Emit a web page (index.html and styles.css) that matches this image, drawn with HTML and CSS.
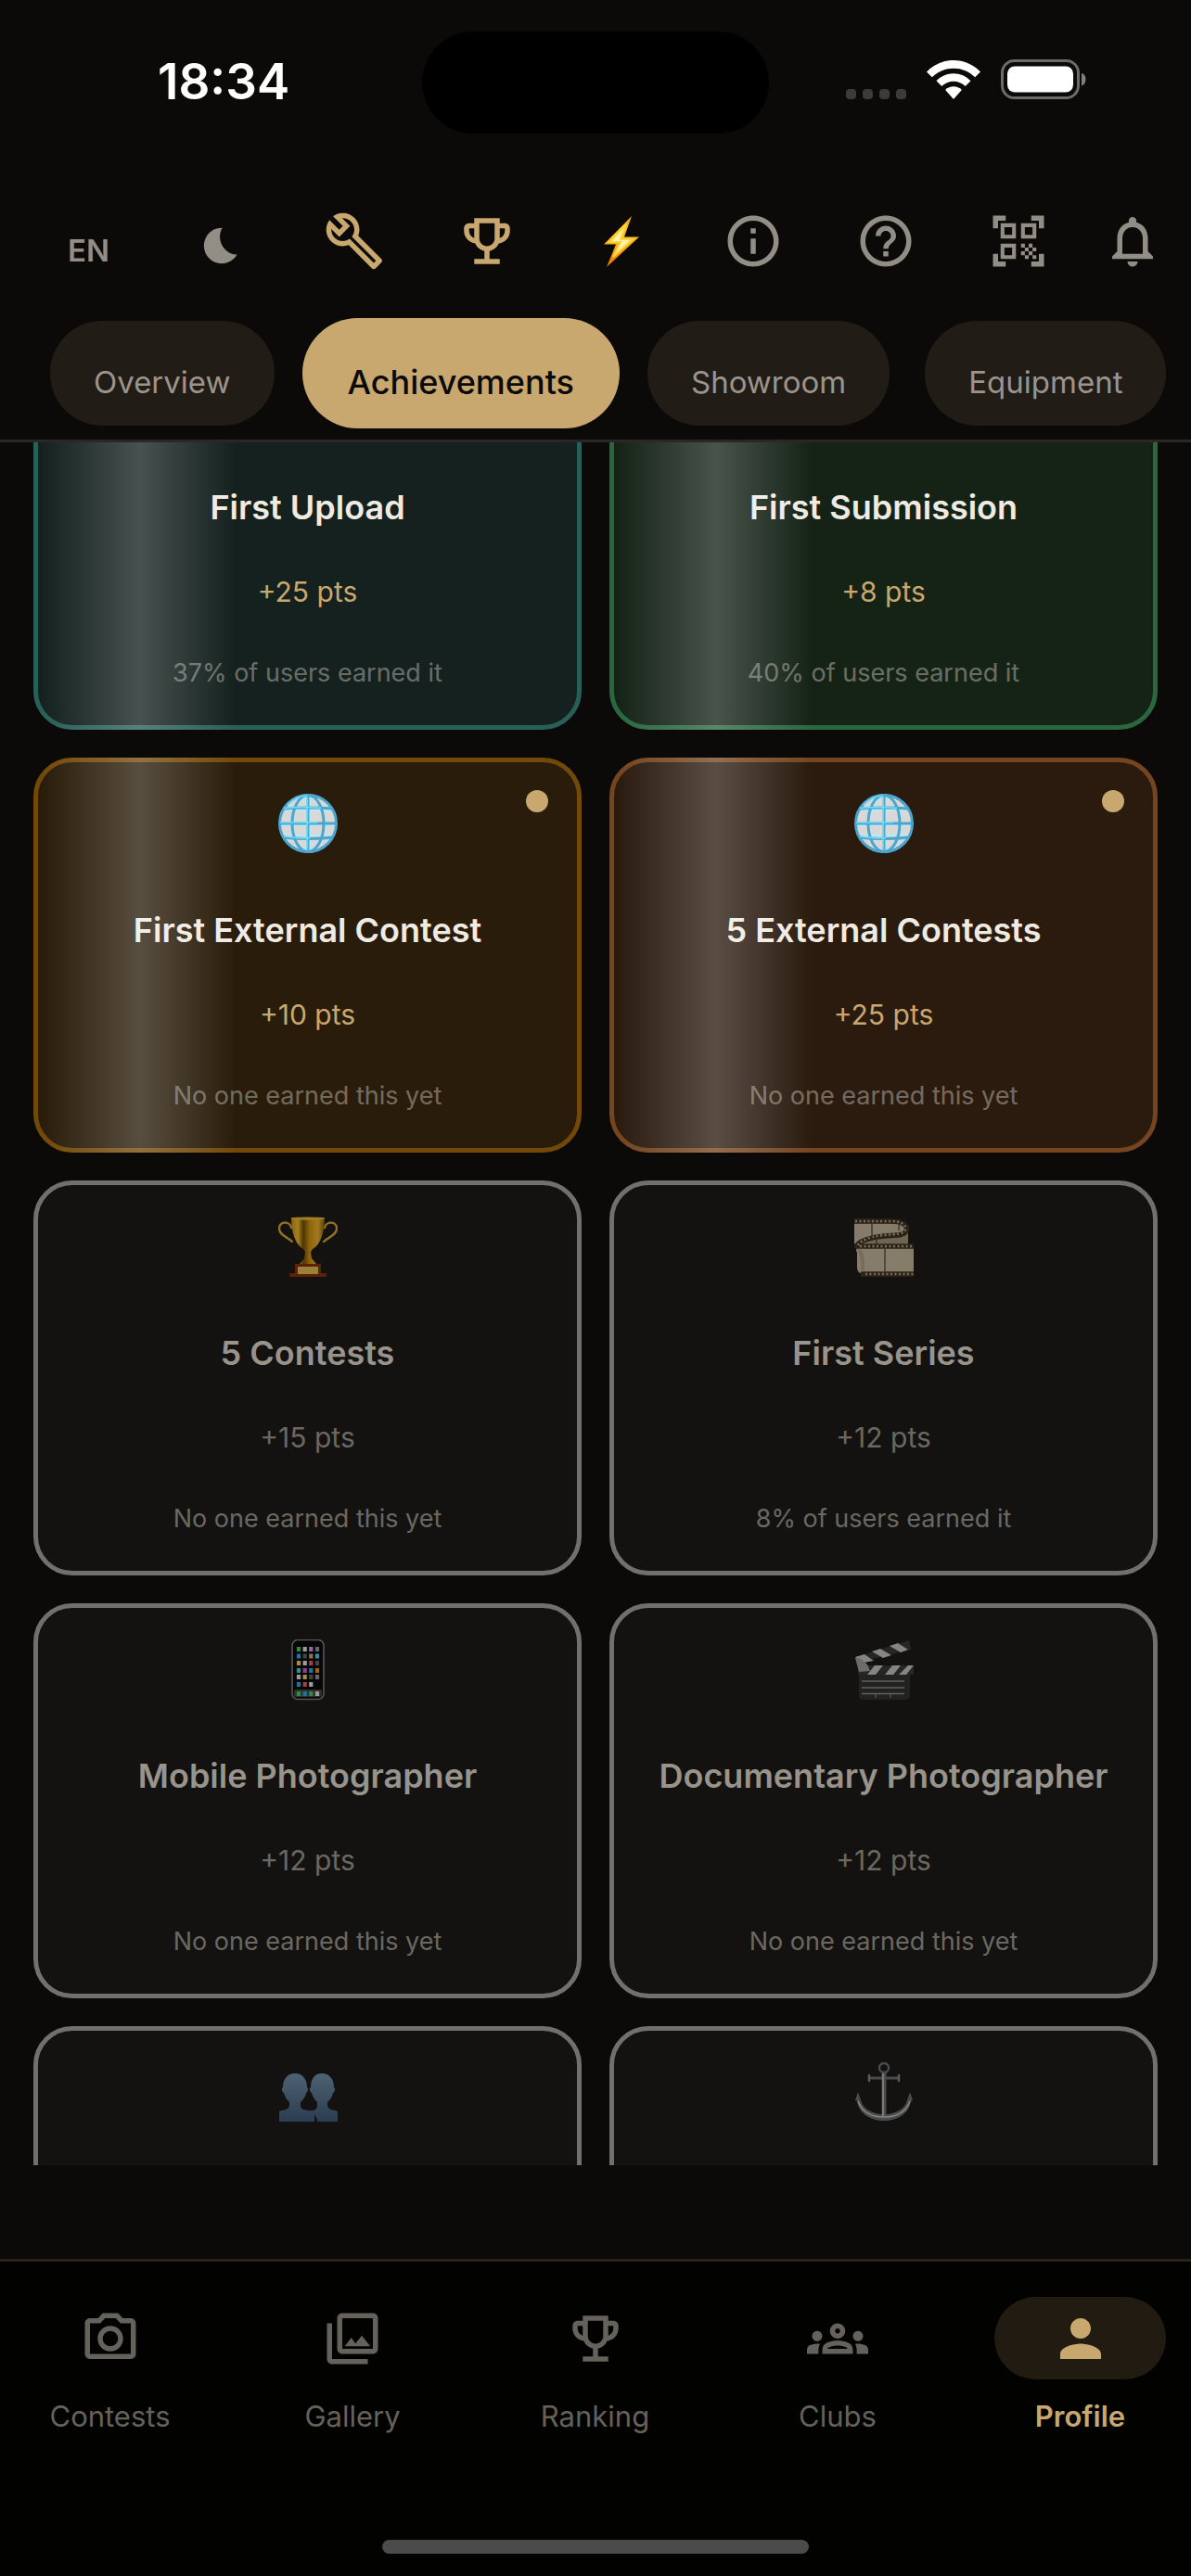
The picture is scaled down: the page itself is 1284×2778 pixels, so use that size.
FILE: index.html
```html
<!DOCTYPE html>
<html lang="en">
<head>
  <meta charset="UTF-8" />
  <meta name="viewport" content="width=device-width, initial-scale=1.0" />
  <title>Profile - Achievements</title>
  <link rel="stylesheet" href="styles.css">
</head>
<body>
  <!-- shared icon shapes -->
  <svg class="defs" aria-hidden="true">
    <symbol id="i-trophy" viewBox="0 0 24 24"><path d="M19 5h-2V3H7v2H5c-1.1 0-2 .9-2 2v1c0 2.55 1.92 4.63 4.39 4.94.63 1.5 1.98 2.63 3.61 2.96V19H7v2h10v-2h-4v-3.1c1.63-.33 2.98-1.46 3.61-2.96C19.08 12.63 21 10.55 21 8V7c0-1.1-.9-2-2-2zM5 8V7h2v3.82C5.84 10.4 5 9.3 5 8zm7 6c-1.65 0-3-1.35-3-3V5h6v6c0 1.65-1.35 3-3 3zm7-6c0 1.3-.84 2.4-2 2.82V7h2v1z"/></symbol>
    <symbol id="e-globe" viewBox="0 0 64 66">
      <circle cx="32" cy="32" r="31" fill="#d9d8d6"/>
      <g fill="none" stroke="#b9e9f7" stroke-width="2">
        <ellipse cx="33" cy="33" rx="17" ry="30"/><path d="M34 3v58M3 34h57M7 18h50M7 45h50"/>
      </g>
      <g fill="none" stroke="#4aa6cf" stroke-width="3">
        <ellipse cx="32" cy="32" rx="17" ry="30.5"/>
        <path d="M32 1v62M1 32h62"/>
        <path d="M6 16q26-2 52 0M5 47q27 3 54 0"/>
        <circle cx="32" cy="32" r="30.5"/>
      </g>
      <path d="M6 15.500q22-2 40 0M2 31h40M6 46q14 2 28 2M10 12Q20 2 31 2M31 3v58" fill="none" stroke="#74dcf6" stroke-width="1.600"/>
    </symbol>
  </svg>

  <div class="status">
    <time class="clock">18:34</time>
    <div class="island"></div>
    <div class="signals">
      <span class="cell"><i></i><i></i><i></i><i></i></span>
      <svg class="wifi" viewBox="0 0 58 42" aria-hidden="true">
        <path d="M29 0C18 0 8 4.300 0 12.500L5.800 18.300C12 12 20 8.700 29 8.700S46 12 52.200 18.300L58 12.500C50 4.300 40 0 29 0z"/>
        <path d="M29 14.300c-7.200 0-13.600 2.900-18.500 7.900l5.800 5.900c3.300-3.400 7.800-5.400 12.700-5.400s9.400 2 12.700 5.400l5.800-5.900C42.600 17.200 36.200 14.300 29 14.300z"/>
        <path d="M29 28.300c-3.500 0-6.500 1.300-8.800 3.700L29 42l8.800-10c-2.300-2.400-5.300-3.700-8.800-3.700z"/>
      </svg>
      <svg class="battery" viewBox="0 0 93 43" aria-hidden="true">
        <rect x="1.500" y="1.500" width="82" height="40" rx="13" fill="none" stroke="#6b6b6a" stroke-width="3"/>
        <rect x="7" y="7.500" width="71" height="28" rx="8"/>
        <path d="M87 15c6 1 6 12 0 13.500z" fill="#80807f"/>
      </svg>
    </div>
  </div>

  <header class="top">
    <div class="tools">
      <button class="tool lang">EN</button>
      <button class="tool moon" aria-label="Dark mode"><svg viewBox="0 0 24 24"><path d="M12.340 2.020C6.590 1.820 2 6.420 2 12c0 5.520 4.480 10 10 10 3.710 0 6.930-2.020 8.660-5.020-7.510-.25-12.090-8.430-8.320-14.960z"/></svg></button>
      <button class="tool gold" aria-label="Tools"><svg viewBox="0 0 24 24"><path d="M22.610 18.990l-9.080-9.080c.93-2.340.45-5.100-1.440-7C9.790.61 6.210.4 3.660 2.260L7.500 6.110 6.080 7.520 2.250 3.690C.39 6.230.6 9.820 2.900 12.110c1.860 1.860 4.570 2.350 6.890 1.480l9.110 9.110c.39.39 1.020.39 1.410 0l2.300-2.300c.4-.38.4-1.010 0-1.410zm-3 1.600l-9.460-9.460c-.61.45-1.290.72-2 .82-1.360.2-2.790-.21-3.830-1.250C3.370 9.760 2.930 8.500 3 7.260l3.090 3.090 4.240-4.240-3.090-3.090c1.240-.07 2.490.37 3.440 1.310 1.080 1.080 1.490 2.570 1.240 3.960-.12.71-.42 1.370-.88 1.960l9.450 9.450-.88.89z"/></svg></button>
      <button class="tool gold" aria-label="Awards"><svg><use href="#i-trophy"/></svg></button>
      <button class="tool" aria-label="Boost"><svg viewBox="0 0 66 66">
        <defs><linearGradient id="g-bolt" x1="0" y1="0" x2="0" y2="1"><stop offset="0" stop-color="#ffae0c"/><stop offset=".4" stop-color="#ffc21c"/><stop offset=".6" stop-color="#ffa00a"/><stop offset="1" stop-color="#e87a00"/></linearGradient></defs>
        <path d="M45 6L15 36.500h13L18 61 53 28.500H37z" fill="url(#g-bolt)"/>
        <path d="M39 15L21 34h12l-8 16 21-19H33z" fill="#fff3a6" stroke="#ffd53d" stroke-width="2"/>
      </svg></button>
      <button class="tool" aria-label="Info"><svg viewBox="0 0 24 24"><path d="M11 7h2v2h-2zm0 4h2v6h-2zm1-9C6.480 2 2 6.480 2 12s4.480 10 10 10 10-4.480 10-10S17.520 2 12 2zm0 18c-4.410 0-8-3.590-8-8s3.590-8 8-8 8 3.590 8 8-3.590 8-8 8z"/></svg></button>
      <button class="tool" aria-label="Help"><svg viewBox="0 0 24 24"><path d="M11 18h2v-2h-2v2zm1-16C6.480 2 2 6.480 2 12s4.480 10 10 10 10-4.480 10-10S17.520 2 12 2zm0 18c-4.410 0-8-3.590-8-8s3.590-8 8-8 8 3.590 8 8-3.590 8-8 8zm0-14c-2.210 0-4 1.790-4 4h2c0-1.100.9-2 2-2s2 .9 2 2c0 2-3 1.750-3 5h2c0-2.250 3-2.500 3-5 0-2.210-1.790-4-4-4z"/></svg></button>
      <button class="tool" aria-label="Scan QR code"><svg viewBox="0 0 24 24"><path d="M9.500 6.500v3h-3v-3h3M11 5H5v6h6V5zm-1.500 9.500v3h-3v-3h3M11 13H5v6h6v-6zm6.500-6.500v3h-3v-3h3M19 5h-6v6h6V5zm-6 8h1.500v1.500H13V13zm1.500 1.500H16V16h-1.500v-1.500zM16 13h1.500v1.500H16V13zm-3 3h1.500v1.500H13V16zm1.500 1.500H16V19h-1.500v-1.500zM16 16h1.500v1.500H16V16zm1.500-1.500H19V16h-1.500v-1.500zm0 3H19V19h-1.500v-1.500zM22 7h-2V4h-3V2h5v5zm0 15v-5h-2v3h-3v2h5zM2 22h5v-2H4v-3H2v5zM2 2v5h2V4h3V2H2z"/></svg></button>
      <button class="tool bell" aria-label="Notifications"><svg viewBox="0 0 24 24"><path d="M12 22c1.100 0 2-.9 2-2h-4c0 1.100.9 2 2 2zm6-6v-5c0-3.070-1.630-5.640-4.500-6.320V4c0-.83-.67-1.500-1.500-1.500s-1.500.67-1.500 1.500v.68C7.640 5.360 6 7.920 6 11v5l-2 2v1h16v-1l-2-2zm-2 1H8v-6c0-2.480 1.510-4.500 4-4.500s4 2.020 4 4.500v6z"/></svg></button>
    </div>
    <div class="tabs">
      <button class="tab">Overview</button>
      <button class="tab active">Achievements</button>
      <button class="tab">Showroom</button>
      <button class="tab">Equipment</button>
    </div>
  </header>

  <main class="scroller" id="scroller">
    <div class="grid">
      <article class="card teal">
        <div class="emoji"></div>
        <h3>First Upload</h3>
        <p class="pts">+25 pts</p>
        <p class="rate">37% of users earned it</p>
      </article>
      <article class="card green">
        <div class="emoji"></div>
        <h3>First Submission</h3>
        <p class="pts">+8 pts</p>
        <p class="rate">40% of users earned it</p>
      </article>

      <article class="card amber">
        <span class="dot"></span>
        <svg class="emoji"><use href="#e-globe"/></svg>
        <h3>First External Contest</h3>
        <p class="pts">+10 pts</p>
        <p class="rate">No one earned this yet</p>
      </article>
      <article class="card bronze">
        <span class="dot"></span>
        <svg class="emoji"><use href="#e-globe"/></svg>
        <h3>5 External Contests</h3>
        <p class="pts">+25 pts</p>
        <p class="rate">No one earned this yet</p>
      </article>

      <article class="card locked">
        <svg class="emoji" viewBox="0 0 64 66">
          <defs><linearGradient id="g-cup"><stop offset="0" stop-color="#8a6410"/><stop offset=".2" stop-color="#a5801f"/><stop offset=".36" stop-color="#4d3508"/><stop offset=".55" stop-color="#8f6508"/><stop offset=".8" stop-color="#a07a22"/><stop offset="1" stop-color="#5c400a"/></linearGradient></defs>
          <path d="M14 12C13 5 1 4 1 13c0 7 9 9 14 14M50 12C51 5 63 4 63 13c0 7-9 9-14 14" fill="none" stroke="#8f7027" stroke-width="2.400" stroke-linecap="round"/>
          <path d="M14 1h36c0 15-4 29-13 34l-2 3 1 7 5 6H23l5-6 1-7-2-3C18 30 14 16 14 1z" fill="url(#g-cup)"/>
          <ellipse cx="32" cy="2" rx="18" ry="1.600" fill="#a38028"/>
          <path d="M18 51h28v10h6v4H12v-4h6z" fill="#59230a"/>
          <rect x="21" y="54" width="22" height="8" fill="#9c8038"/>
        </svg>
        <h3>5 Contests</h3>
        <p class="pts">+15 pts</p>
        <p class="rate">No one earned this yet</p>
      </article>
      <article class="card locked">
        <svg class="emoji" viewBox="0 0 64 66">
          <path d="M0 5C24 5 56 4 58 14V38H2V31L0 29z" fill="#6f6553"/>
          <path d="M0 8h48c6 0 8 4 6 7L2 28 0 29z" fill="#857b68"/>
          <path d="M3 34h61v28H12C6 62 3 60 3 54z" fill="#857c69"/>
          <path d="M6 36q4 10 3 22" fill="none" stroke="#786d5a" stroke-width="4"/>
          <path d="M0 5h38c14 0 20 4 18 10s-10 5-24 6S3 27 3 32h61M7 62h57" fill="none" stroke="#2c2418" stroke-width="5.500"/>
          <path d="M1 5h38c12 0 17 4 16 9s-10 5-23 6-25 5-28 11M6 32h58M12 62h52" fill="none" stroke="#786d5a" stroke-width="2.600" stroke-dasharray="2 2.500"/>
          <path d="M19 8v15M24 25v6M48 9v6M33 35v24" stroke="#31291d" stroke-width="1.200"/>
        </svg>
        <h3>First Series</h3>
        <p class="pts">+12 pts</p>
        <p class="rate">8% of users earned it</p>
      </article>

      <article class="card locked">
        <svg class="emoji" viewBox="0 0 64 66">
          <rect x="15" y="0.500" width="34" height="64" rx="6" fill="#070707" stroke="#565654" stroke-width="1.600"/>
          <rect x="17" y="54" width="30" height="8" rx="2" fill="#30302f"/>
          <!-- app icons, one column at a time -->
          <g fill="none" stroke-width="4.200">
            <path d="M22 8v5M22 56v5" stroke="#2e8b46"/><path d="M22 15.500v5M22 46v5" stroke="#1878a4"/><path d="M22 23v5" stroke="#a09040"/><path d="M22 31v5" stroke="#388e8e"/><path d="M22 38v5" stroke="#9b9b99"/>
            <path d="M28.700 8v5M28.700 23v5" stroke="#9b9b99"/><path d="M28.700 15.500v5" stroke="#444"/><path d="M28.700 31v5" stroke="#983c94"/><path d="M28.700 38v5" stroke="#a09040"/><path d="M28.700 46v5" stroke="#a0413e"/><path d="M28.700 56v5" stroke="#1878a4"/>
            <path d="M35.300 8v5" stroke="#9168a6"/><path d="M35.300 15.500v5" stroke="#88735d"/><path d="M35.300 23v5" stroke="#a0413e"/><path d="M35.300 31v5" stroke="#1878a4"/><path d="M35.300 38v5" stroke="#444"/><path d="M35.300 46v5" stroke="#9b9b99"/><path d="M35.300 56v5" stroke="#2e8b46"/>
            <path d="M42 8v5M42 38v5" stroke="#666"/><path d="M42 15.500v5" stroke="#388ea4"/><path d="M42 23v5" stroke="#444"/><path d="M42 31v5" stroke="#a4620c"/><path d="M42 56v5" stroke="#9b9b99"/>
          </g>
        </svg>
        <h3>Mobile Photographer</h3>
        <p class="pts">+12 pts</p>
        <p class="rate">No one earned this yet</p>
      </article>
      <article class="card locked">
        <svg class="emoji" viewBox="0 0 64 66">
          <path d="M5 38h55v22q0 5-5 5H10q-5 0-5-5z" fill="#222221"/>
          <path d="M1 19L59 1l2 10L5 25z" fill="#262625"/>
          <path d="M1 19l10-3 10 7-11 2zM19 13l9-3 12 7-9 3zM38 7l9-3 11 7-8 3z" fill="#858584"/>
          <path d="M4 28h60v10H4z" fill="#262625"/>
          <path d="M22 28h9l-8 10h-9zM41 28h9l-8 10h-9zM58 28h6l-8 10h-8z" fill="#858584"/>
          <path d="M1 20l4 15 12-1-3-7-8-7z" fill="#6b6c6b"/>
          <path d="M8 45h46M8 52h46M8 58.500h46" stroke="#626261" stroke-width="1.400"/>
          <path d="M23 59v4M39 59v4" stroke="#626261"/>
        </svg>
        <h3>Documentary Photographer</h3>
        <p class="pts">+12 pts</p>
        <p class="rate">No one earned this yet</p>
      </article>

      <article class="card locked">
        <svg class="emoji" viewBox="0 0 64 66">
          <defs><linearGradient id="g-bust" x1="0" y1="0" x2="0" y2="1"><stop offset="0" stop-color="#4d6273"/><stop offset="1" stop-color="#2b3d50"/></linearGradient></defs>
          <path d="M18 12c8 0 13 6 13 15 2 1 1 5-1 6-1 5-3 7-6 10v5c2 5 11 3 15 6V64H1V53c4-2 10-1 11-6v-4c-3-3-5-6-6-10-2-1-3-5-1-6 0-9 5-15 13-15z" fill="url(#g-bust)"/>
          <path d="M47 12c8 0 13 6 13 15 2 1 1 5-1 6-1 5-3 7-6 10v4c1 5 7 4 11 6V64H42c0-5-3-9-9-11 4-1 8-1 9-5v-5c-3-3-5-6-6-10-2-1-3-5-1-6 0-9 4-15 12-15z" fill="url(#g-bust)"/>
        </svg>
      </article>
      <article class="card locked">
        <svg class="emoji" viewBox="0 0 64 66">
          <g fill="none" stroke="#4a4b4c">
            <ellipse cx="32" cy="6" rx="5" ry="5" stroke-width="2.400"/>
            <path d="M15 17h34" stroke-width="3"/>
            <path d="M32 10v51" stroke-width="5"/>
          </g>
          <path d="M4 32l-3 9 2 1c2 13 14 21 29 21s27-8 29-21l2-1-3-9-3 9c-2 9-12 14-22 15h-6C19 55 9 50 7 41z" fill="#4a4b4c"/>
          <path d="M4 42c4 11 14 17 28 17s24-6 28-17M31 12v46" fill="none" stroke="#858584" stroke-width="1.600"/>
          <path d="M16 14v6M48 14v6" stroke="#5a5a5a" stroke-width="2.500" stroke-linecap="round"/>
        </svg>
      </article>
    </div>
  </main>

  <nav class="bottom">
    <div class="links">
      <a href="#contests"><span class="pill"><svg viewBox="0 0 24 24"><path d="M14.120 4l1.830 2H20v12H4V6h4.050l1.830-2h4.240M15 2H9L7.170 4H4c-1.100 0-2 .9-2 2v12c0 1.100.9 2 2 2h16c1.100 0 2-.9 2-2V6c0-1.100-.9-2-2-2h-3.170L15 2zm-3 7c1.650 0 3 1.350 3 3s-1.350 3-3 3-3-1.350-3-3 1.350-3 3-3m0-2c-2.760 0-5 2.240-5 5s2.240 5 5 5 5-2.240 5-5-2.240-5-5-5z"/></svg></span>Contests</a>
      <a href="#gallery"><span class="pill"><svg viewBox="0 0 24 24"><path d="M20 4v12H8V4h12m0-2H8c-1.100 0-2 .9-2 2v12c0 1.100.9 2 2 2h12c1.100 0 2-.9 2-2V4c0-1.100-.9-2-2-2zm-8.500 9.670l1.690 2.260 2.480-3.100L19 15H9zM2 6v14c0 1.100.9 2 2 2h14v-2H4V6H2z"/></svg></span>Gallery</a>
      <a href="#ranking"><span class="pill"><svg><use href="#i-trophy"/></svg></span>Ranking</a>
      <a href="#clubs"><span class="pill"><svg viewBox="0 0 24 24"><path d="M4 13c1.100 0 2-.9 2-2s-.9-2-2-2-2 .9-2 2 .9 2 2 2zm1.130 1.100c-.37-.06-.74-.1-1.130-.1-.99 0-1.930.21-2.780.58C.48 14.900 0 15.620 0 16.430V18h4.500v-1.610c0-.83.23-1.610.63-2.290zM20 13c1.100 0 2-.9 2-2s-.9-2-2-2-2 .9-2 2 .9 2 2 2zm4 3.430c0-.81-.48-1.530-1.220-1.850-.85-.37-1.790-.58-2.780-.58-.39 0-.76.04-1.130.1.400.68.63 1.460.63 2.290V18H24v-1.570zm-7.760-2.780c-1.170-.52-2.610-.9-4.240-.9-1.630 0-3.070.39-4.240.9C6.680 14.130 6 15.210 6 16.390V18h12v-1.610c0-1.180-.68-2.260-1.760-2.740zM8.070 16c.09-.23.13-.39.91-.69.97-.38 1.990-.56 3.020-.56s2.050.18 3.020.56c.77.3.81.46.91.69H8.070zM12 8c.55 0 1 .45 1 1s-.45 1-1 1-1-.45-1-1 .45-1 1-1m0-2c-1.660 0-3 1.340-3 3s1.340 3 3 3 3-1.340 3-3-1.340-3-3-3z"/></svg></span>Clubs</a>
      <a href="#profile" class="active"><span class="pill"><svg viewBox="0 0 24 24"><path d="M12 12c2.210 0 4-1.790 4-4s-1.790-4-4-4-4 1.790-4 4 1.790 4 4 4zm0 2c-2.670 0-8 1.340-8 4v2h16v-2c0-2.660-5.330-4-8-4z"/></svg></span>Profile</a>
    </div>
    <div class="home-bar"></div>
  </nav>

  <script>
    // first row starts partly under the header
    document.getElementById('scroller').scrollTop = 116;
  </script>
</body>
</html>
```
FILE: styles.css
```css
* {
  box-sizing: border-box;
}
body {
  margin: 0;
  height: 100vh;
  display: flex;
  flex-direction: column;
  overflow: hidden;
  background: #0b0a08;
  color: #f0ebe2;
  font-family: Inter, "Noto Sans", sans-serif;
}
button {
  border: none;
  background: none;
  padding: 0;
  font: inherit;
  color: inherit;
  cursor: pointer;
}
svg {
  display: block;
  fill: currentColor;
}
.defs {
  position: absolute;
  width: 0;
  height: 0;
}

/* status bar */
.status {
  display: grid;
  grid-template-columns: 1fr auto 1fr;
  align-items: center;
  padding-top: 34px;
  color: #fff;
}
.clock {
  padding-left: 170px;
  font-size: 53px;
  line-height: 60px;
  font-weight: 600;
  margin-bottom: 2px;
}
.island {
  width: 374px;
  height: 110px;
  border-radius: 55px;
  background: #000;
}
.signals {
  display: flex;
  justify-content: flex-end;
  align-items: flex-end;
  padding-right: 112px;
  margin-bottom: 8px;
}
.cell {
  display: flex;
  gap: 7px;
  margin-right: 22px;
}
.cell i {
  width: 11px;
  height: 11px;
  border-radius: 4px;
  background: #3c3b39;
}
.wifi {
  width: 58px;
  height: 42px;
  margin-right: 22px;
}
.battery {
  width: 93px;
  height: 43px;
}

/* header */
.top {
  flex: none;
  border-bottom: 3px solid #292827;
}
.tools {
  display: flex;
  padding: 82px 12px 0 24px;
}
.tool {
  flex: 1;
  height: 67px;
  display: flex;
  align-items: center;
  justify-content: center;
  color: #928e85;
}
.tool svg {
  width: 66px;
  height: 66px;
}
.tool.gold {
  color: #c8a86e;
}
.tool.lang {
  padding-top: 20px;
  font-size: 33px;
  font-weight: 600;
}
.tool.moon {
  padding-top: 10px;
}
.tool.moon svg {
  width: 46px;
  height: 46px;
}
.tool.bell {
  flex: none;
  width: 102px;
}
.tabs {
  display: flex;
  align-items: center;
  gap: 38px;
  padding: 50px 20px 12px 54px;
  overflow: hidden;
}
.tab {
  flex: none;
  height: 113px;
  padding: 18px 47px 0;
  border-radius: 56px;
  background: #221c16;
  color: #9b948c;
  font-size: 33px;
}
.tab.active {
  height: 119px;
  margin: 0 -8px;
  padding: 18px 49px 0;
  border-radius: 60px;
  background: #c8a86e;
  color: #0b0a08;
  font-size: 36px;
  font-weight: 500;
}

/* badges */
.scroller {
  flex: 1;
  min-height: 0;
  margin-bottom: 101px;
  overflow-y: auto;
  scrollbar-width: none;
}
.grid {
  display: grid;
  grid-template-columns: 1fr 1fr;
  gap: 30px;
  padding: 0 36px;
}
.card {
  position: relative;
  min-height: 426px;
  padding: 34px 20px 38px;
  border: 5px solid;
  border-radius: 42px;
  text-align: center;
}
.card::after {
  content: "";
  position: absolute;
  inset: -5px;
  border-radius: 42px;
  background: linear-gradient(90deg, transparent 8px, rgba(255, 255, 255, 0.22) 115px, transparent 218px);
}
.card.locked::after {
  display: none;
}
.card.teal {
  background: #14211e;
  border-color: #285f58;
}
.card.green {
  background: #152317;
  border-color: #2a673f;
}
.card.amber {
  background: #291c0a;
  border-color: #734909;
}
.card.bronze {
  background: #2b1b0f;
  border-color: #74451f;
}
.card.locked {
  background: #131210;
  border-color: #70706e;
}
.emoji {
  width: 64px;
  height: 66px;
  margin: 0 auto;
}
.dot {
  position: absolute;
  top: 30px;
  right: 31px;
  width: 24px;
  height: 24px;
  border-radius: 50%;
  background: #c8a86e;
}
.card h3 {
  margin: 51px 0 0;
  font-size: 36px;
  line-height: 60px;
  font-weight: 600;
}
.card p {
  margin: 43px 0 0;
  font-size: 30px;
  line-height: 36px;
  color: #c8a86e;
}
.card .rate {
  margin-top: 52px;
  font-size: 27px;
  color: rgba(240, 235, 226, 0.4);
}
.card.locked h3 {
  color: #98948c;
}
.card.locked .pts,
.card.locked .rate {
  color: #6b6862;
}

/* bottom nav */
.bottom {
  flex: none;
  padding: 38px 27px 24px 26px;
  border-top: 3px solid #2c2318;
  background: #020201;
}
.links {
  display: flex;
  justify-content: space-between;
}
.links a {
  display: flex;
  flex-direction: column;
  align-items: center;
  gap: 22px;
  color: #65615b;
  font-size: 31px;
  line-height: 36px;
  text-decoration: none;
}
.pill {
  width: 185px;
  height: 89px;
  border-radius: 45px;
  display: flex;
  align-items: center;
  justify-content: center;
}
.pill svg {
  width: 66px;
  height: 66px;
}
.links a.active {
  color: #c8a86e;
  font-weight: 600;
}
.active .pill {
  background: #221b12;
}
.home-bar {
  width: 460px;
  height: 15px;
  margin: 115px auto 0;
  border-radius: 8px;
  background: #4b4b4b;
}
```
